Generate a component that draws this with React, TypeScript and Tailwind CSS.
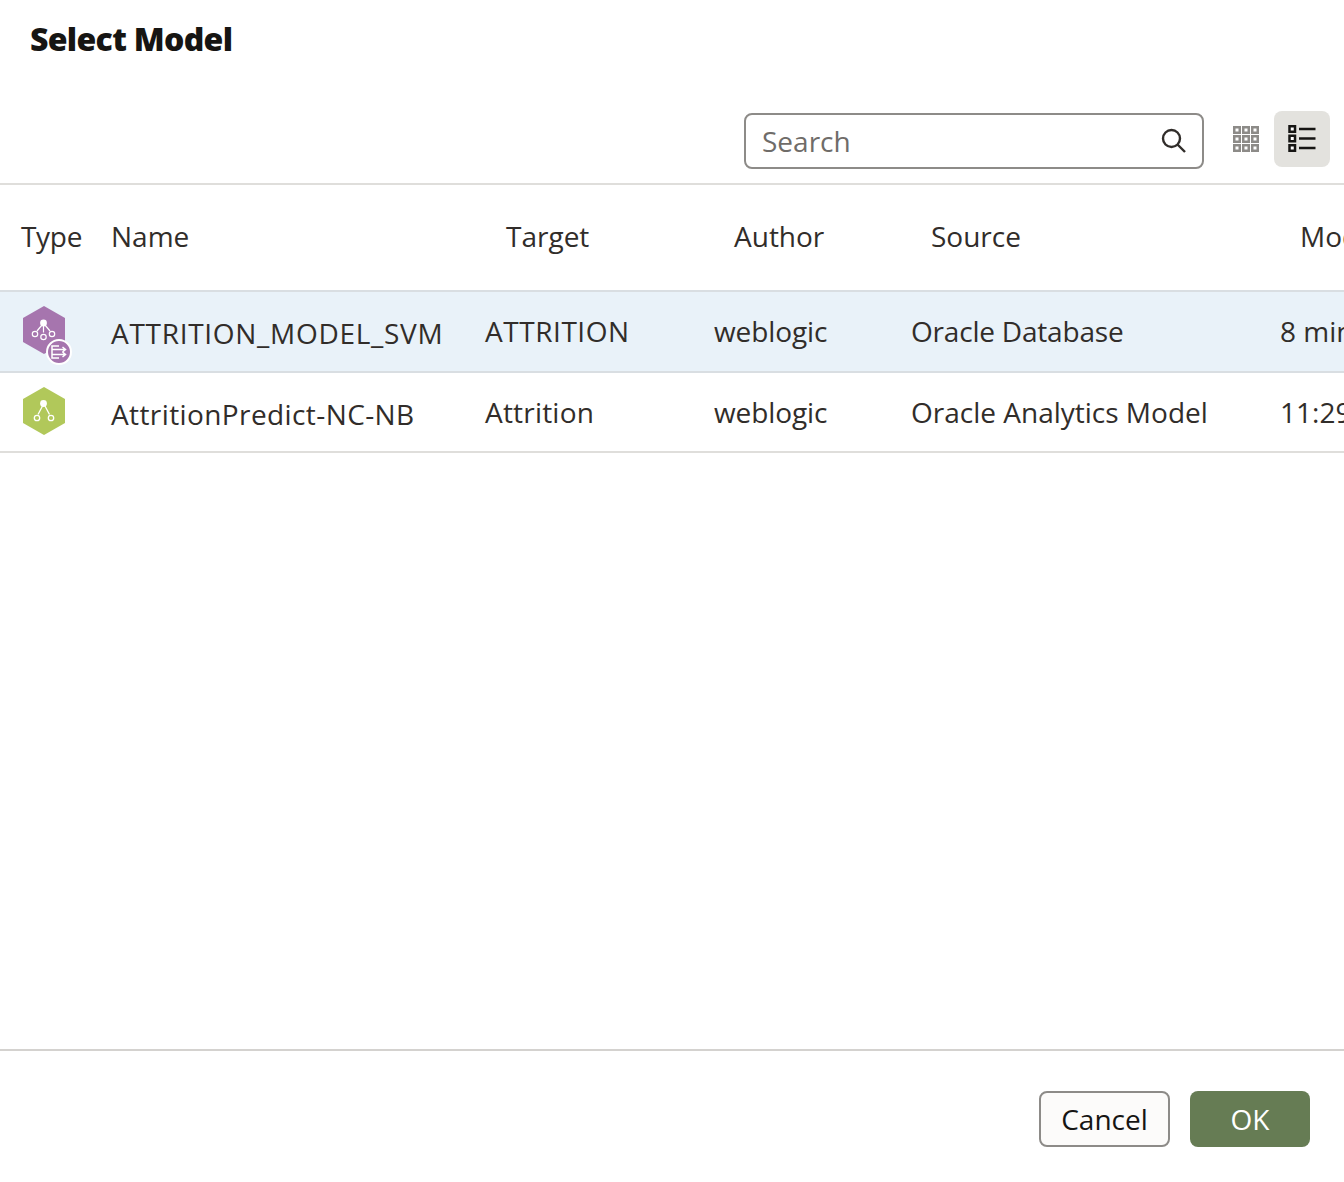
import React from 'react';

const font = { fontFamily: '"Open Sans", "Noto Sans", sans-serif' };

const HexIcon = ({ color, branches }: { color: string; branches: 2 | 3 }) => (
  <svg width="44" height="48" viewBox="0 0 44 48">
    <path d="M22 0 L43 12 L43 36 L22 48 L1 36 L1 12 Z" fill={color} />
    <circle cx="21.5" cy={branches === 3 ? 17 : 16.5} r="3.4" fill="#fff" />
    {branches === 3 ? (
      <g stroke="#fff" strokeWidth="1.2" fill="none">
        <path d="M21.5 19 L21.5 26.5 M20 19 L15 25 M23 19 L28 25" />
        <circle cx="13" cy="28" r="2.7" />
        <circle cx="21.5" cy="31" r="2.7" />
        <circle cx="30" cy="28" r="2.7" />
      </g>
    ) : (
      <g stroke="#fff" strokeWidth="1.3" fill="none">
        <path d="M20.5 19 L16 27.5 M23 19 L27.5 27.5" />
        <circle cx="15" cy="31" r="2.7" />
        <circle cx="29" cy="31" r="2.7" />
      </g>
    )}
  </svg>
);

const GridIcon = () => (
  <svg width="28" height="28" viewBox="0 0 28 28">
    {[1, 10, 19].map((y) =>
      [1, 10, 19].map((x) => (
        <rect key={`${x}-${y}`} x={x + 1.25} y={y + 1.25} width="5.5" height="5.5" fill="#fff" stroke="#8d8b88" strokeWidth="2.5" />
      ))
    )}
  </svg>
);

const ListIcon = () => (
  <svg width="28" height="28" viewBox="0 0 28 28" fill="#161513">
    {[1, 10.5, 20].map((y) => (
      <g key={y}>
        <rect x={1.5} y={y + 0.25} width="5.5" height="5.5" fill="#fff" stroke="#161513" strokeWidth="2.5" />
        <rect x={11} y={y + 1.75} width="16.5" height="2.5" />
      </g>
    ))}
  </svg>
);

const SearchIcon = () => (
  <svg width="26" height="26" viewBox="0 0 26 26" fill="none" stroke="#312d2a" strokeWidth="2.4">
    <circle cx="10.5" cy="10.5" r="8.5" />
    <path d="M16.5 16.5 L24 24" />
  </svg>
);

const rows = [
  { name: 'ATTRITION_MODEL_SVM', nameClass: 'tracking-[0.7px] pt-[4px]', target: 'ATTRITION', targetClass: 'tracking-[0.55px]', author: 'weblogic', source: 'Oracle Database', modified: '8 minutes ago', selected: true },
  { name: 'AttritionPredict-NC-NB', nameClass: 'tracking-[0.4px] pt-[3px]', target: 'Attrition', targetClass: 'tracking-[0.2px]', author: 'weblogic', source: 'Oracle Analytics Model', modified: '11:29 AM', selected: false },
];

const cols = 'grid grid-cols-[111px_374px_229px_197px_369px_200px] w-[1480px]';

export default function App() {
  return (
    <div className="h-[1182px] w-[1344px] bg-white overflow-hidden flex flex-col text-[#312d2a]" style={font}>
      <h1 className="pl-[30px] pt-[17px] h-[113px] text-[32px] leading-[44px] font-extrabold text-[#161513] tracking-[-0.7px]">
        Select Model
      </h1>

      <div className="flex items-center justify-end h-[56px] pr-[14px]">
        <div className="w-[460px] h-[56px] border-2 border-[#8d8b88] rounded-lg flex items-center justify-between pl-[16px] pr-[15px] mr-[28px]">
          <span className="text-[28px] text-[#6f6c69]">Search</span>
          <SearchIcon />
        </div>
        <div className="w-[28px] h-[28px] mr-[14px] mb-[4px] flex items-center justify-center">
          <GridIcon />
        </div>
        <div className="w-[56px] h-[56px] mb-[4px] bg-[#e3e2de] rounded-lg flex items-center justify-center">
          <ListIcon />
        </div>
      </div>

      <div className="mt-[14px] h-[2px] bg-[#dfdedb]" />

      <div className="flex-1 overflow-hidden">
        <div className={`${cols} h-[107px] pb-[3px] items-center text-[28px] border-b-2 border-[#d9dee2]`}>
          <div className="pl-[21px] tracking-[-0.3px]">Type</div>
          <div>Name</div>
          <div className="pl-[21px]">Target</div>
          <div className="pl-[20px]">Author</div>
          <div className="pl-[20px]">Source</div>
          <div className="pl-[20px]">Modified</div>
        </div>
        {rows.map((row) => (
          <div
            key={row.name}
            className={`${cols} items-center text-[28px] border-b-2 ${row.selected ? 'h-[81px] pb-[2px] bg-[#e9f2f9] border-[#d9dee2]' : 'h-[80px] border-[#dfdedb]'}`}
          >
            <div className="pl-[22px] pb-[2px] relative">
              <HexIcon color={row.selected ? '#a675ae' : '#b1c85a'} branches={row.selected ? 3 : 2} />
              {row.selected && (
                <div className="absolute left-[46px] top-[33px] w-[26px] h-[26px] rounded-full bg-[#a675ae] border-2 border-white flex items-center justify-center">
                  <svg width="18" height="14" viewBox="0 0 18 14" fill="none" stroke="#fff" strokeWidth="1.5">
                    <path d="M9 1 H2 V13 H9 M2 4.5 H15.5 M12.5 2 L15.5 4.5 L12.5 7 M2 9.5 H15.5 M12.5 7 L15.5 9.5 L12.5 12" />
                  </svg>
                </div>
              )}
            </div>
            <div className={row.nameClass}>{row.name}</div>
            <div className={row.targetClass}>{row.target}</div>
            <div className="tracking-[-0.1px]">{row.author}</div>
            <div className={row.selected ? 'tracking-[-0.2px]' : ''}>{row.source}</div>
            <div className="whitespace-nowrap">{row.modified}</div>
          </div>
        ))}
      </div>

      <div className="h-[2px] bg-[#d4d2cf]" />

      <div className="h-[131px] pt-[40px] pr-[34px] flex justify-end gap-[20px]">
        <button className="w-[131px] h-[56px] border-2 border-[#8d8b88] rounded-lg bg-[#fcfbfa] text-[28px] text-[#161513]">Cancel</button>
        <button className="w-[120px] h-[56px] rounded-lg bg-[#667c54] text-[28px] text-white">OK</button>
      </div>
    </div>
  );
}
